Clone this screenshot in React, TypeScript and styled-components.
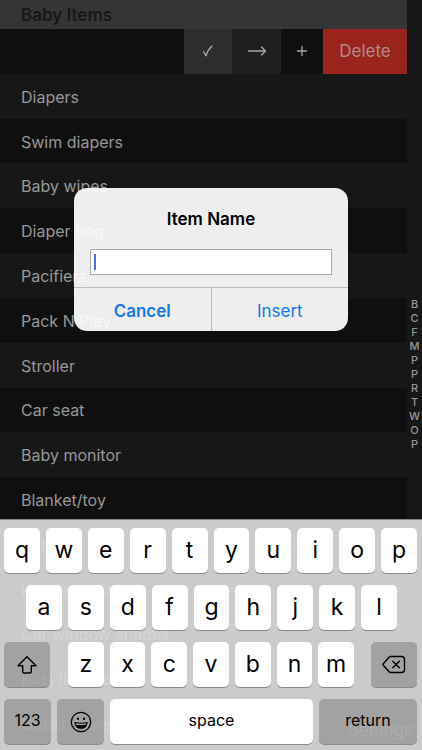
import React from "react";
import styled, { createGlobalStyle } from "styled-components";

const GlobalStyle = createGlobalStyle`
  *, *::before, *::after { box-sizing: border-box; }
  body {
    margin: 0;
    background: #171717;
    font-family: Inter, "Liberation Sans", sans-serif;
    font-size: 17px;
    -webkit-font-smoothing: antialiased;
  }
  button, input { font: inherit; margin: 0; }
  button { padding: 0; border: 0; background: none; cursor: pointer; }
`;

const Screen = styled.div`
  position: relative;
  display: flex;
  height: 100vh;
  overflow: hidden;
  background: #171717;
`;

const ListPane = styled.main`
  display: flex;
  flex: 1;
  min-width: 0;
  flex-direction: column;
  padding-bottom: 4px;
`;

const SectionTitle = styled.h2`
  flex: none;
  height: 29px;
  margin: 0;
  padding: 0 21px;
  background: #353535;
  color: #181818;
  font-size: 17px;
  font-weight: 600;
  line-height: 30px;
`;

const Rows = styled.ul`
  display: flex;
  flex: 1;
  flex-direction: column;
  margin: 0;
  padding: 0;
  list-style: none;
`;

const Row = styled.li`
  display: flex;
  flex: 1 1 1px;
  align-items: center;
  padding-top: 1px;
  padding-left: 21px;
  color: #989898;
  background: #171717;
  font-size: 16px;
  &:nth-child(odd) { background: #0f0f0f; }
`;

const SwipeRow = styled(Row)`
  align-items: stretch;
  justify-content: flex-end;
  padding-top: 0;
`;

const RowAction = styled.button<{ $bg: string; $width: number }>`
  display: flex;
  align-items: center;
  justify-content: center;
  width: ${(p) => p.$width}px;
  background: ${(p) => p.$bg};
  color: #a8a8a8;
  font-size: 17px;
`;

const DeleteAction = styled(RowAction)`
  color: #b18b89;
`;

const IndexBar = styled.nav`
  display: flex;
  flex: none;
  flex-direction: column;
  align-items: center;
  justify-content: center;
  width: 15px;
  padding-bottom: 2px;
`;

const IndexLink = styled.a`
  color: #969696;
  font-size: 11px;
  font-weight: 500;
  line-height: 14px;
  text-decoration: none;
`;

const SettingsButton = styled.button`
  position: absolute;
  right: 9px;
  bottom: 8px;
  color: #b0b0b0;
  line-height: 24px;
`;

const Overlay = styled.div`
  position: absolute;
  inset: 0;
  display: flex;
  flex-direction: column;
`;

const DialogArea = styled.div`
  display: flex;
  flex: 1;
  align-items: center;
  justify-content: center;
`;

const Dialog = styled.form`
  width: 65%;
  min-width: 270px;
  max-width: 340px;
  overflow: hidden;
  border-radius: 13px;
  background: rgba(255, 255, 255, 0.93);
`;

const DialogTitle = styled.label`
  display: block;
  padding: 20px 16px 19px;
  color: #000;
  font-weight: 600;
  line-height: 22px;
  text-align: center;
`;

const Field = styled.div`
  position: relative;
  margin: 0 16px 12px;
`;

const TextInput = styled.input`
  display: block;
  width: 100%;
  height: 26px;
  padding: 0 5px;
  border: 1px solid #a9a9ab;
  border-radius: 0;
  outline: none;
  background: #fff;
  color: #000;
  font-size: 15px;
`;

const Caret = styled.span`
  position: absolute;
  top: 5px;
  left: 4px;
  width: 2px;
  height: 16px;
  background: #4a6cf0;
`;

const DialogButtons = styled.div`
  display: flex;
  border-top: 1px solid #bcbcbe;
`;

const DialogButton = styled.button<{ $strong?: boolean }>`
  flex: 1;
  height: 43px;
  padding-top: 2px;
  color: #1479e8;
  font-weight: ${(p) => (p.$strong ? 600 : 400)};
  & + & { border-left: 1px solid #bcbcbe; }
`;

const Keyboard = styled.section`
  display: flex;
  flex-direction: column;
  gap: 12px;
  padding: 8px 5px 6px 4px;
  border-top: 1px solid #858585;
  background: rgba(217, 217, 217, 0.93);
`;

const KeyRow = styled.div<{ $inset?: boolean }>`
  display: flex;
  gap: 6px;
  padding: ${(p) => (p.$inset ? "0 20px 0 22px" : "0")};
`;

const LetterGroup = styled.div`
  display: flex;
  flex: 1;
  gap: 6px;
  padding: 0 11px 0 12px;
`;

const Key = styled.button`
  display: flex;
  flex: 1;
  min-width: 0;
  height: 45px;
  align-items: center;
  justify-content: center;
  padding-bottom: 2px;
  border-radius: 5px;
  background: #fff;
  box-shadow: 0 1px 0 #898a8c;
  color: #000;
  font-size: 23px;
  font-weight: 400;
`;

const WordKey = styled(Key)`
  padding-bottom: 3px;
  font-size: 16px;
`;

const ActionKey = styled(WordKey)<{ $width: number; $icon?: boolean }>`
  flex: 0 0 ${(p) => p.$width}px;
  padding-bottom: ${(p) => (p.$icon ? 0 : 3)}px;
  background: rgba(0, 0, 0, 0.2);
`;

const items = [
  "Diapers",
  "Swim diapers",
  "Baby wipes",
  "Diaper bag",
  "Pacifiers",
  "Pack N Play",
  "Stroller",
  "Car seat",
  "Baby monitor",
  "Blanket/toy",
  "Bottles",
  "Hand sanitizer",
  "Car window shades",
  "Kids ID cards",
  "Outlet covers",
];

const sections = ["B", "C", "F", "M", "P", "P", "R", "T", "W", "O", "P"];

const lineProps = {
  fill: "none",
  stroke: "currentColor",
  strokeLinecap: "round" as const,
  strokeLinejoin: "round" as const,
};

const CheckIcon = () => (
  <svg width="12" height="14" viewBox="0 0 12 14" {...lineProps} strokeWidth="1.3" aria-hidden="true">
    <path d="M1.500 7.500 4 11.800Q6 5.500 10 2" />
  </svg>
);

const ArrowIcon = () => (
  <svg width="20" height="12" viewBox="0 0 20 12" {...lineProps} strokeWidth="1.3" aria-hidden="true">
    <path d="M1.500 6H18.500M14.500 2 18.500 6l-4 4" />
  </svg>
);

const PlusIcon = () => (
  <svg width="12" height="12" viewBox="0 0 12 12" {...lineProps} strokeWidth="1.3" aria-hidden="true">
    <path d="M6 1.500v9M1.500 6h9" />
  </svg>
);

const ShiftIcon = () => (
  <svg width="22" height="20" viewBox="0 0 22 20" {...lineProps} strokeWidth="1.4" aria-hidden="true">
    <path d="M11 1.700 20 10.800H15.300V16.500Q15.300 18 13.800 18H8.200Q6.700 18 6.700 16.500V10.800H2Z" />
  </svg>
);

const SmileIcon = () => (
  <svg width="22" height="22" viewBox="0 0 22 22" {...lineProps} strokeWidth="1.3" aria-hidden="true">
    <circle cx="11" cy="11" r="9.700" />
    <ellipse cx="7.900" cy="7.800" rx="1.100" ry="1.300" fill="currentColor" stroke="none" />
    <ellipse cx="14.100" cy="7.800" rx="1.100" ry="1.300" fill="currentColor" stroke="none" />
    <path d="M4.800 11.500Q11 13 17.200 11.500C16.800 15 14.400 17.300 11 17.300S5.200 15 4.800 11.500Z" strokeWidth="1.1" />
    <path d="M5.400 13.400Q11 15 16.600 13.400C15.700 16 13.700 17.300 11 17.300S6.300 16 5.400 13.400Z" fill="currentColor" stroke="none" />
  </svg>
);

const BackspaceIcon = () => (
  <svg width="24" height="19" viewBox="0 0 24 19" {...lineProps} strokeWidth="1.4" aria-hidden="true">
    <path d="M8.800 1.500H19.500Q22.500 1.500 22.500 4.500V14.500Q22.500 17.500 19.500 17.500H8.800Q7.800 17.500 7.100 16.700L1.300 10.300Q.7 9.500 1.300 8.700L7.100 2.300Q7.800 1.500 8.800 1.500Z" />
    <path d="m10.800 6.200 6.600 6.600M17.400 6.200l-6.600 6.600" />
  </svg>
);

const Letters = ({ keys }: { keys: string }) => (
  <>
    {keys.split("").map((k) => (
      <Key key={k} type="button">{k}</Key>
    ))}
  </>
);

export default function App() {
  return (
    <>
      <GlobalStyle />
      <Screen>
        <ListPane>
          <SectionTitle>Baby Items</SectionTitle>
          <Rows>
            <SwipeRow>
              <RowAction type="button" $bg="#2d2d2d" $width={48} aria-label="Check"><CheckIcon /></RowAction>
              <RowAction type="button" $bg="#1f1f1f" $width={49} aria-label="Move"><ArrowIcon /></RowAction>
              <RowAction type="button" $bg="#0f0f0f" $width={42} aria-label="Add"><PlusIcon /></RowAction>
              <DeleteAction type="button" $bg="#9a231e" $width={84}>Delete</DeleteAction>
            </SwipeRow>
            {items.map((item) => (
              <Row key={item}>{item}</Row>
            ))}
          </Rows>
        </ListPane>
        <IndexBar aria-label="Sections">
          {sections.map((letter, i) => (
            <IndexLink key={i} href="#">{letter}</IndexLink>
          ))}
        </IndexBar>
        <SettingsButton type="button">Settings</SettingsButton>

        <Overlay>
          <DialogArea>
            <Dialog role="dialog" aria-label="Item Name" onSubmit={(e) => e.preventDefault()}>
              <DialogTitle htmlFor="item-name">Item Name</DialogTitle>
              <Field>
                <TextInput id="item-name" type="text" autoComplete="off" />
                <Caret />
              </Field>
              <DialogButtons>
                <DialogButton type="button" $strong>Cancel</DialogButton>
                <DialogButton type="submit">Insert</DialogButton>
              </DialogButtons>
            </Dialog>
          </DialogArea>
          <Keyboard aria-label="Keyboard">
            <KeyRow><Letters keys="qwertyuiop" /></KeyRow>
            <KeyRow $inset><Letters keys="asdfghjkl" /></KeyRow>
            <KeyRow>
              <ActionKey type="button" $icon $width={46} aria-label="Shift"><ShiftIcon /></ActionKey>
              <LetterGroup><Letters keys="zxcvbnm" /></LetterGroup>
              <ActionKey type="button" $icon $width={46} aria-label="Backspace"><BackspaceIcon /></ActionKey>
            </KeyRow>
            <KeyRow>
              <ActionKey type="button" $width={47}>123</ActionKey>
              <ActionKey type="button" $icon $width={47} aria-label="Emoji"><SmileIcon /></ActionKey>
              <WordKey type="button">space</WordKey>
              <ActionKey type="button" $width={98}>return</ActionKey>
            </KeyRow>
          </Keyboard>
        </Overlay>
      </Screen>
    </>
  );
}
